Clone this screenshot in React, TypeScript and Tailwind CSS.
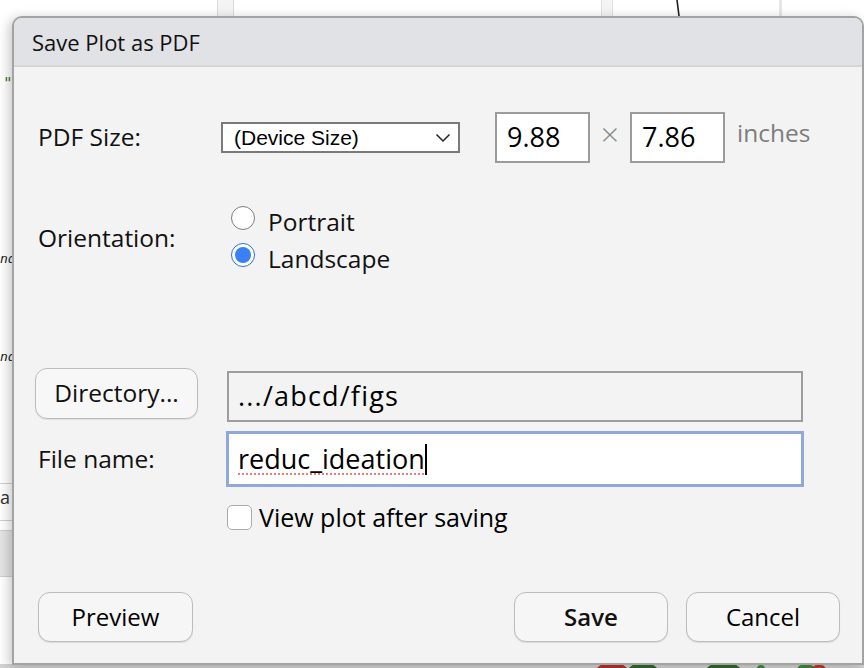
import React from "react";

function Backdrop() {
  return (
    <div className="absolute inset-0 bg-white">
      <div className="absolute left-[217px] top-0 w-[17px] h-[668px] bg-[#f4f4f4] border-x border-[#dadada]" />
      <div className="absolute left-[601px] top-0 w-[12px] h-[20px] bg-[#f4f4f4] border-x border-[#e0e0e0]" />
      <div className="absolute left-[779px] top-0 w-[3px] h-[20px] bg-[#e6e6e6]" />
      <svg className="absolute left-[670px] top-0" width="20" height="20" viewBox="0 0 20 20">
        <path d="M7 0 L9.5 20" stroke="#222" strokeWidth="1.6" fill="none" />
      </svg>
      <div className="absolute left-[3px] top-[76px] text-[16px] leading-none text-[#3a7d2a] font-['DejaVu_Sans_Mono',monospace]">"</div>
      <div className="absolute left-0 top-[252px] text-[13px] italic leading-none text-[#222] font-['DejaVu_Sans_Mono',monospace]">nd</div>
      <div className="absolute left-0 top-[350px] text-[13px] italic leading-none text-[#222] font-['DejaVu_Sans_Mono',monospace]">nd</div>
      <div className="absolute left-0 top-[483px] w-[14px] h-[1px] bg-[#d0d0d0]" />
      <div className="absolute left-0 top-[488px] text-[18px] leading-none text-[#333] font-['Open_Sans',sans-serif]">a</div>
      <div className="absolute left-0 top-[520px] w-[14px] h-[1px] bg-[#d0d0d0]" />
      <div className="absolute left-0 top-[530px] w-[14px] h-[47px] bg-[#e4e4e4] border-y border-[#d0d0d0]" />
      <div className="absolute left-0 top-[664px] w-[864px] h-[4px] bg-[#d3d3d3]" />
      <div className="absolute left-[595px] top-[664px] w-[34px] h-[20px] rounded-full bg-[#b8322a]" />
      <div className="absolute left-[627px] top-[664px] w-[32px] h-[20px] rounded-full bg-[#2f6a2c]" />
      <div className="absolute left-[705px] top-[664px] w-[37px] h-[20px] rounded-full bg-[#2f6a2c]" />
      <div className="absolute left-[757px] top-[665px] w-[8px] h-[8px] rounded-full bg-[#3f8a38]" />
      <div className="absolute left-[797px] top-[665px] w-[18px] h-[10px] rounded-full bg-[#3f8a38]" />
      <div className="absolute left-[812px] top-[665px] w-[14px] h-[10px] rounded-full bg-[#c0392b]" />
    </div>
  );
}

function RadioOff() {
  return (
    <span className="mb-[8px] inline-block w-[24px] h-[24px] rounded-full border-[1.5px] border-[#7d7d7d] bg-white shrink-0" />
  );
}

function RadioOn() {
  return (
    <span className="mb-[8px] flex items-center justify-center w-[24px] h-[24px] rounded-full border-[1.5px] border-[#2c6fe3] bg-white shrink-0">
      <span className="block w-[16px] h-[16px] rounded-full bg-[#3a7ff5]" />
    </span>
  );
}

function Dialog() {
  return (
    <div className="absolute left-[12px] top-[16px] w-[852px] h-[649px] rounded-t-[10px] border-2 border-[#a3a3a3] bg-[#f2f3f2] shadow-[-3px_2px_12px_rgba(0,0,0,0.22)] flex flex-col overflow-hidden font-['Open_Sans',sans-serif] text-[#111]">
      <div className="h-[49px] shrink-0 bg-[#e1e2e5] border-b-2 border-[#d5d6d8] flex items-center pl-[18px] pt-[2px] text-[22px]">
        Save Plot as PDF
      </div>
      <div className="flex-1 flex flex-col pl-[24px] pr-[22px] pb-[21px]">
        <div className="mt-[45px] flex items-center h-[51px]">
          <div className="w-[183px] text-[24.5px]">PDF Size:</div>
          <div className="w-[239px] h-[31px] border-2 border-[#7a7a7a] bg-white flex items-center pl-[11px] pr-[7px] font-['Liberation_Sans',sans-serif] text-[21px] text-black">
            <span className="flex-1">(Device Size)</span>
            <svg width="16" height="10" viewBox="0 0 16 10">
              <path d="M1.5 1.5 L8 8 L14.5 1.5" stroke="#222" strokeWidth="1.5" fill="none" />
            </svg>
          </div>
          <div className="ml-[35px] w-[95px] h-[51px] border-2 border-[#9b9b9b] bg-white pl-[10px] text-[27px] text-black flex items-center">
            9.88
          </div>
          <div className="w-[40px] self-start -mt-[2px] text-center text-[32px] text-[#8a8a8a] font-light">×</div>
          <div className="w-[95px] h-[51px] border-2 border-[#9b9b9b] bg-white pl-[10px] text-[27px] text-black flex items-center">
            7.86
          </div>
          <div className="ml-[12px] self-start mt-[3px] text-[24.5px] text-[#7d7d7d]">inches</div>
        </div>

        <div className="mt-[44px] flex items-start">
          <div className="w-[193px] mt-[13px] text-[24.5px]">Orientation:</div>
          <div className="flex flex-col gap-[7px]">
            <label className="flex items-center h-[30px] gap-[13px] text-[24.5px]">
              <RadioOff />
              <span>Portrait</span>
            </label>
            <label className="flex items-center h-[30px] gap-[13px] text-[24.5px]">
              <RadioOn />
              <span>Landscape</span>
            </label>
          </div>
        </div>

        <div className="mt-[94px] flex items-start">
          <button className="-ml-[3px] w-[163px] h-[51px] rounded-[12px] border-[1.5px] border-[#bcbcbc] bg-[#f7f7f7] shadow-[0_1px_1px_rgba(0,0,0,0.08)] text-[24.5px] text-[#111] flex items-center justify-center">
            Directory...
          </button>
          <div className="ml-[29px] mt-[3px] w-[576px] h-[51px] border-2 border-[#9d9d9d] flex items-center pl-[9px] text-[27px] tracking-[1.2px] text-black">
            .../abcd/figs
          </div>
        </div>

        <div className="mt-[9px] flex items-center">
          <div className="w-[188px] text-[24.5px]">File name:</div>
          <div className="w-[578px] h-[56px] border-[3px] border-[#90a9d9] bg-white flex items-center pl-[9px] text-[27px] text-black">
            <span className="underline decoration-dotted decoration-[#f07a7a] decoration-2 underline-offset-[5px]">
              reduc_ideation
            </span>
            <span className="inline-block w-[2px] h-[31px] bg-black" />
          </div>
        </div>

        <div className="mt-[12px] ml-[189px] flex items-center gap-[7px]">
          <span className="inline-block w-[25px] h-[25px] rounded-[5px] border-[1.5px] border-[#ababab] bg-white shrink-0" />
          <span className="text-[25px] text-black">View plot after saving</span>
        </div>

        <div className="mt-auto flex items-center">
          <button className="w-[155px] h-[50px] rounded-[12px] border-[1.5px] border-[#bdbdbd] bg-[#f6f6f6] shadow-[0_1px_1px_rgba(0,0,0,0.1)] text-[24px] text-black">
            Preview
          </button>
          <div className="flex-1" />
          <button className="w-[154px] h-[50px] rounded-[12px] border-[1.5px] border-[#bdbdbd] bg-[#f6f6f6] shadow-[0_1px_1px_rgba(0,0,0,0.1)] text-[24px] font-semibold text-[#111]">
            Save
          </button>
          <button className="ml-[18px] w-[154px] h-[50px] rounded-[12px] border-[1.5px] border-[#bdbdbd] bg-[#f6f6f6] shadow-[0_1px_1px_rgba(0,0,0,0.1)] text-[24px] text-black">
            Cancel
          </button>
        </div>
      </div>
    </div>
  );
}

export default function App() {
  return (
    <div className="relative w-[864px] h-[668px] overflow-hidden bg-white">
      <Backdrop />
      <Dialog />
    </div>
  );
}
